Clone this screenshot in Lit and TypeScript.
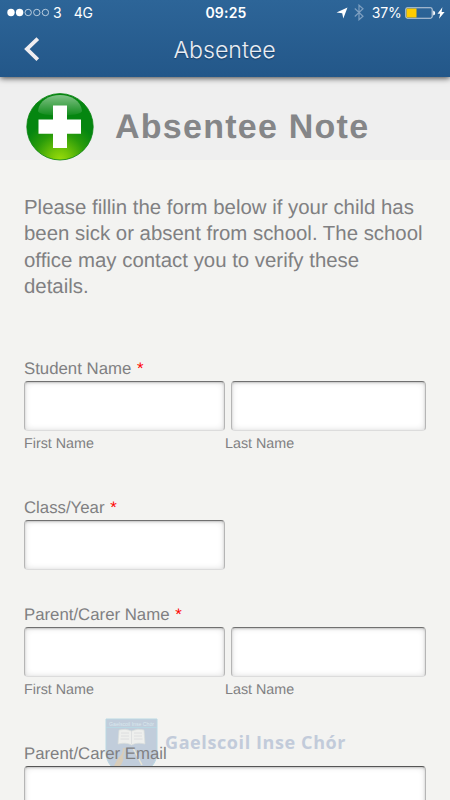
import { LitElement, html, css, svg } from "lit";
import { customElement, property } from "lit/decorators.js";

@customElement("status-bar")
class StatusBar extends LitElement {
  static styles = css`
    :host { display: grid; grid-template-columns: 1fr auto 1fr; align-items: center; height: 25px;
      color: #fff; font: 14px/25px Inter, sans-serif; padding: 0 5px 0 7px; }
    .side { display: flex; align-items: center; height: 25px; }
    .right { justify-content: flex-end; }
    .dots { width: 42px; height: 9px; }
    .carrier { margin-left: 4px; }
    .net { margin-left: 12px; letter-spacing: -0.3px; }
    .time { font-weight: 600; letter-spacing: 0.2px; }
    .arrow { width: 12px; height: 12px; margin-right: 6px; }
    .bt { width: 10px; height: 17px; margin-right: 8px; }
    .pct { letter-spacing: -0.2px; margin-right: 3px; }
    .battery { width: 31px; height: 12px; margin-right: 1.5px; }
    .bolt { width: 8px; height: 12px; }
  `;
  render() {
    return html`
      <div class="side">
        <svg class="dots" viewBox="0 0 42 9">
          ${[0, 1, 2, 3, 4].map((i) => svg`<circle cx=${4 + i * 8.6} cy="4.5" r=${i < 2 ? 3.7 : 3.2}
            fill=${i < 2 ? "#fff" : "none"} stroke=${i < 2 ? "none" : "#dbe6f0"} stroke-width="0.8"/>`)}
        </svg>
        <span class="carrier">3</span><span class="net">4G</span>
      </div>
      <span class="time">09:25</span>
      <div class="side right">
        <svg class="arrow" viewBox="0 0 12 12"><path d="M11.500.4 7.300 11.500 6.200 6.200 .5 5.600Z" fill="#fff"/></svg>
        <svg class="bt" viewBox="0 0 10 17"><path d="M.8 4.500 9 12.300 5 15.800V1.200l4 3.500L.8 12.500" fill="none" stroke="#7e9fc0" stroke-width="1.2"/></svg>
        <span class="pct">37%</span>
        <svg class="battery" viewBox="0 0 31 12">
          <rect x=".8" y=".8" width="26.4" height="10.4" rx="1.6" fill="none" stroke="#c3d0de" stroke-width="1.1"/>
          <rect x="1.5" y="1.5" width="10" height="9" fill="#ffcc00"/>
          <path d="M28.200 3.500q2 .5 2 2.500t-2 2.500z" fill="#fff"/>
        </svg>
        <svg class="bolt" viewBox="0 0 8 12"><path d="M5.400.2.5 6.800h2.700L2 11.800 7.600 5H4.600Z" fill="#fff"/></svg>
      </div>`;
  }
}

@customElement("form-field")
class FormField extends LitElement {
  @property() label = "";
  @property({ type: Boolean }) required = false;
  @property({ type: Boolean }) wide = false;
  @property({ type: Array }) parts: string[] = [""];
  static styles = css`
    :host { display: block; position: relative; color: #808082; font-family: "Liberation Sans", Arial, sans-serif; }
    .label { height: 25px; line-height: 25px; font-size: 16.8px; text-rendering: geometricPrecision; }
    .star { color: #f00; margin-left: 1px; line-height: 1; }
    .row { display: grid; grid-template-columns: 201px 195px; column-gap: 6px; }
    .wide .row { grid-template-columns: 402px; }
    .box { box-sizing: border-box; height: 50px; background: #fff; border: 1px solid #b5b5b5;
      border-top-color: #707070; border-bottom-color: #dcdcdc; border-radius: 4px;
      box-shadow: inset 0 1px 2px #c4c4c4, inset 0 0 6px #ddd; }
    .wide .box { border-top-color: #555; }
    .subs { display: grid; grid-template-columns: 201px 201px; font-size: 14.3px; line-height: 20px; text-rendering: geometricPrecision; margin-top: 3px; }
  `;
  render() {
    return html`<div class=${this.wide ? "wide" : ""}>
      <div class="label">${this.label}${this.required ? html` <span class="star">*</span>` : ""}</div>
      <div class="row">${this.parts.map(() => html`<div class="box"></div>`)}</div>
      ${this.parts.length > 1 ? html`<div class="subs">${this.parts.map((p) => html`<span>${p}</span>`)}</div>` : ""}
    </div>`;
  }
}

@customElement("app-root")
class AppRoot extends LitElement {
  static styles = css`
    :host { display: block; position: relative; height: 800px; overflow: hidden; background: #f3f3f1;
      color: #808082; font-family: "Liberation Sans", Arial, sans-serif; }
    .top { position: relative; height: 77px; background: linear-gradient(#2d6598, #235789);
      box-shadow: 0 1px 6px rgba(0,0,0,.75); z-index: 2; }
    .nav { display: grid; grid-template-columns: 60px 1fr 60px; height: 49px; align-items: center; }
    .back { width: 18px; height: 26px; margin: -2px 0 0 23px; }
    .title { text-align: center; color: #e9edf3; font: 300 23.2px/49px Inter, sans-serif; padding-top: 1px; margin-left: -1px; text-shadow: 0 1px 1px #183f68; }
    .banner { display: flex; height: 83px; background: #efefef; align-items: center; padding-left: 25px; }
    .cross { width: 70px; height: 70px; margin-top: 14.5px; align-self: flex-start; }
    .heading { font-size: 34px; line-height: 40px; font-weight: bold; letter-spacing: 1.25px; color: #858688; margin: 16px 0 0 20px; text-rendering: geometricPrecision; }
    .intro { margin: 35px 24px 0; font-size: 20.4px; line-height: 26.4px; text-rendering: geometricPrecision; white-space: nowrap; }
    .form { position: relative; display: flex; flex-direction: column; padding: 0 24px; margin-top: 55px; z-index: 1; }
    .f2 { margin-top: 41px; }
    .f3 { margin-top: 32px; }
    .f4 { margin-top: 41px; }
    .mark { position: absolute; left: 105px; top: 718px; display: flex; align-items: flex-start; }
    .crest { width: 53px; height: 50px; }
    .school { margin-left: 7px; color: #c2cbda; font: bold 18px/24px "Open Sans", "Noto Sans", sans-serif; margin-top: 12px; letter-spacing: 0.6px; white-space: nowrap; }
  `;
  render() {
    return html`
      <header class="top">
        <status-bar></status-bar>
        <div class="nav">
          <svg class="back" viewBox="0 0 18 26"><path d="M14.800 2.700 3.900 13l10.900 10.700" fill="none" stroke="#f0edf0" stroke-width="3.8"/></svg>
          <div class="title">Absentee</div>
        </div>
      </header>
      <div class="banner">
        <svg class="cross" viewBox="0 0 70 70">
          <defs>
            <radialGradient id="glow" cx=".5" cy="1" r=".6">
              <stop offset="0" stop-color="#98dc0a"/><stop offset=".25" stop-color="#74c608"/>
              <stop offset=".65" stop-color="#2a9c0a"/><stop offset="1" stop-color="#058610"/>
            </radialGradient>
            <linearGradient id="gloss" x1="0" y1="0" x2="0" y2="1">
              <stop offset="0" stop-color="#fff" stop-opacity=".5"/><stop offset="1" stop-color="#fff" stop-opacity=".05"/>
            </linearGradient>
          </defs>
          <circle cx="35" cy="34.8" r="33.2" fill="url(#glow)" stroke="#07820f" stroke-width=".8"/>
          <path d="M13 19C15-2.500 55-2.500 57 19c0 6-44 6-44 0Z" fill="url(#gloss)"/>
          <path d="M28 13.500h14v14h14v14.200H42V56H28V41.700H13.500V27.500H28z" fill="#fff"/>
        </svg>
        <div class="heading">Absentee Note</div>
      </div>
      <div class="intro">Please fillin the form below if your child has<br>been sick or absent from school. The school<br>office may contact you to verify these<br>details.</div>
      <div class="mark">
        <svg class="crest" viewBox="0 0 53 50">
          <path d="M1 1h51v32c0 9-3 13-7 17H8C4 46 1 42 1 33z" fill="#c1cddb" stroke="#b9d8e3"/>
          <path d="M1 9.500h51" stroke="#b9d8e3"/>
          <text x="4" y="7.600" textLength="45" lengthAdjust="spacingAndGlyphs" font-family="Liberation Sans" font-size="5.500" fill="#d9e8ee">Gaelscoil Inse Chór</text>
          <path d="M14 12q7-2 12.500 1 6-3 12.500-1l1 14q-8-2-13.500 1-5-3-13.500-1z" fill="#eeefed" stroke="#d9dcda" stroke-width=".7"/>
          <path d="M26.500 13v13M16 15h8M16 18h8M15.500 21h8.500M29 15h8M29 18h8M29 21h8.500" stroke="#d8dbdc" stroke-width=".8"/>
          <path d="M18 30q0 7-5 10l-4 8h6q4-5 3-8l2-10z" fill="#d9cdb9"/>
          <path d="M28 30 37 47" stroke="#e9e5d4" stroke-width="1.500"/>
        </svg>
        <div class="school">Gaelscoil Inse Chór</div>
      </div>
      <main class="form">
        <form-field label="Student Name" required .parts=${["First Name", "Last Name"]}></form-field>
        <form-field class="f2" label="Class/Year" required></form-field>
        <form-field class="f3" label="Parent/Carer Name" required .parts=${["First Name", "Last Name"]}></form-field>
        <form-field class="f4" label="Parent/Carer Email" wide></form-field>
      </main>`;
  }
}
